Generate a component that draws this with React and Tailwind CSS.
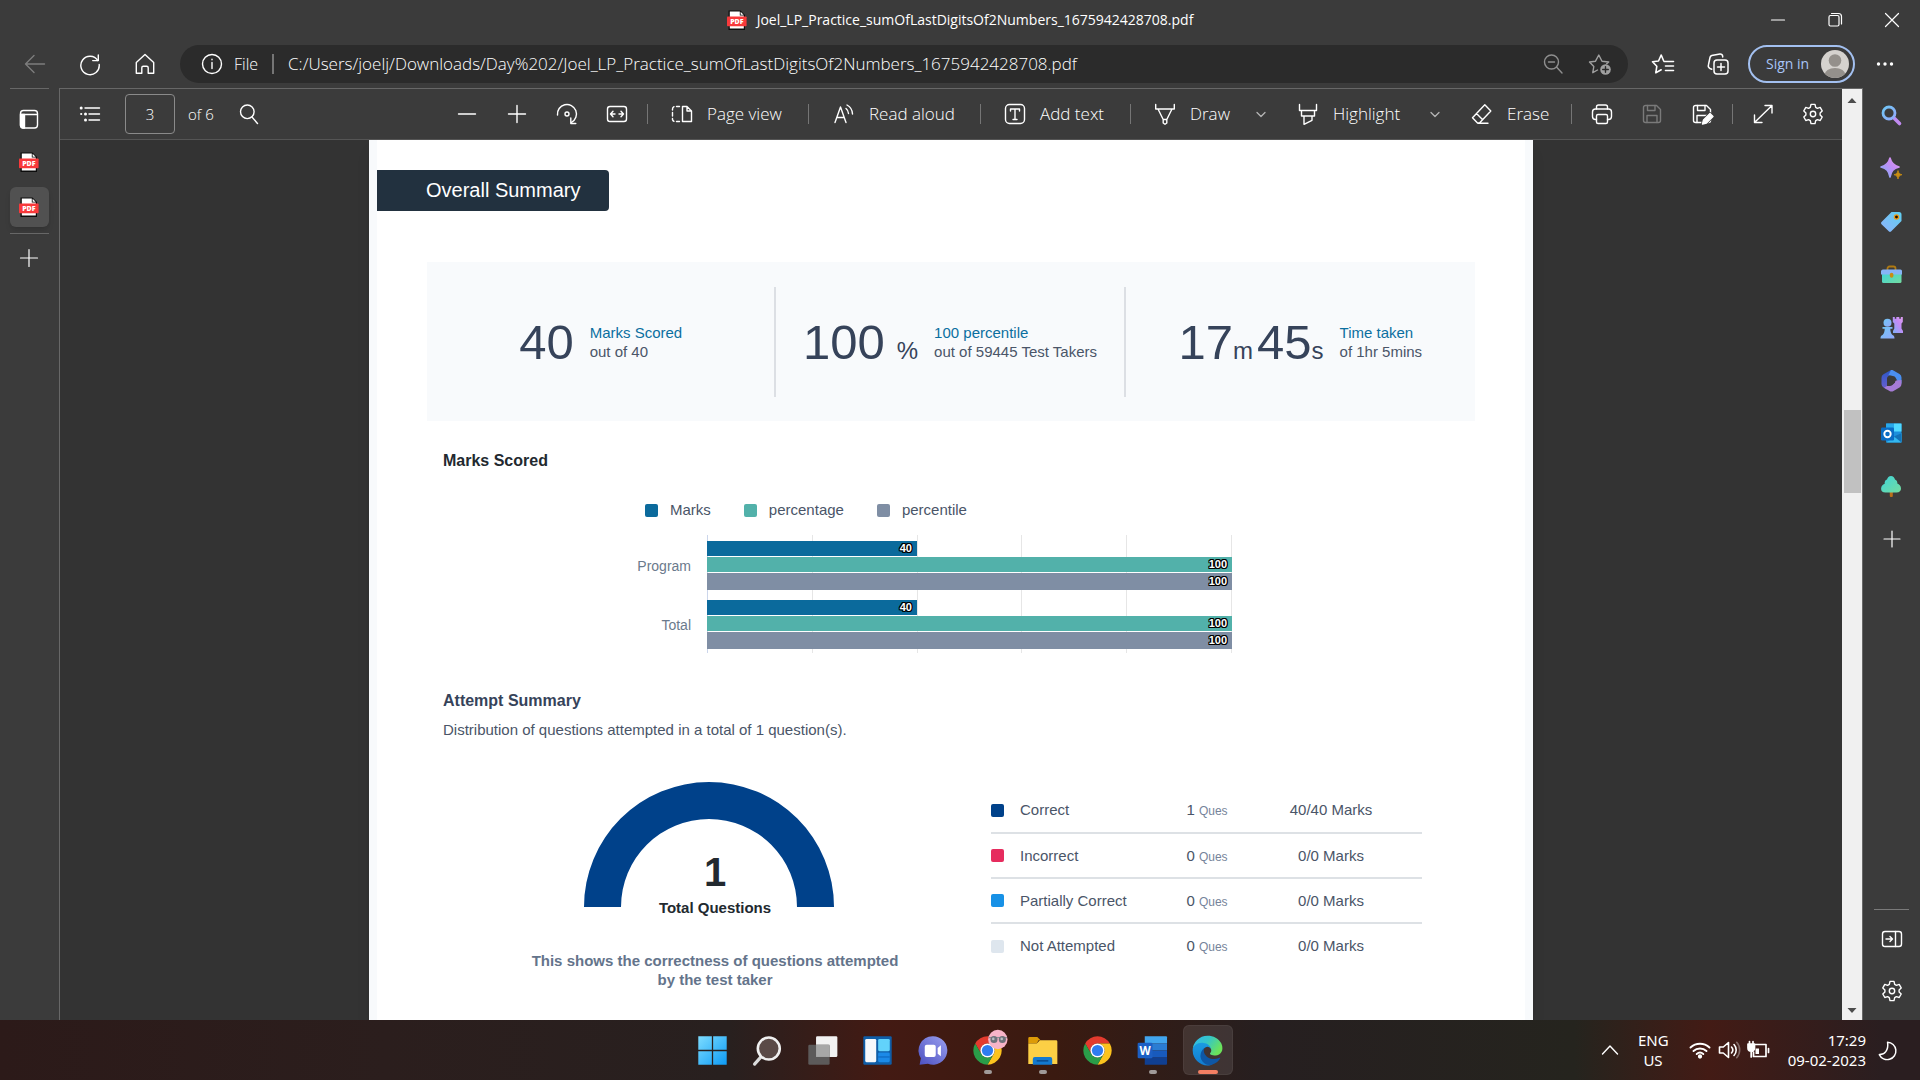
import React from "react";

const PDF_NAME = "Joel_LP_Practice_sumOfLastDigitsOf2Numbers_1675942428708.pdf";

function Line({ size = 24, children, className = "", sw = 1.4 }) {
  return (
    <svg
      width={size}
      height={size}
      viewBox="0 0 24 24"
      fill="none"
      stroke="currentColor"
      strokeWidth={sw}
      strokeLinecap="round"
      strokeLinejoin="round"
      className={"shrink-0 " + className}
      aria-hidden="true"
    >
      {children}
    </svg>
  );
}

function IconButton({ label, className = "w-10 h-10", children }) {
  return (
    <button type="button" aria-label={label} className={"flex shrink-0 items-center justify-center " + className}>
      {children}
    </button>
  );
}

function PdfIcon() {
  return (
    <svg width="20" height="20" viewBox="0 0 20 20" className="shrink-0" aria-hidden="true">
      <path d="M1.5.5h12L18 5v15H1.5z" fill="#0c0c0c" />
      <path d="M2.8 1.4h10v4.2h4V18.6h-14z" fill="#fff" />
      <path d="M13.6 1.8v3h3z" fill="#fff" />
      <rect x="0" y="6.4" width="19.6" height="9.8" rx=".8" fill="#f8393b" />
      <text x="9.8" y="13.8" fontSize="7" fontWeight="800" fill="#fff" textAnchor="middle" fontFamily="Open Sans, sans-serif">PDF</text>
    </svg>
  );
}

function GearIcon() {
  return (
    <Line>
      <path d="M10 2.4h4l.7 2.9 1.7 1 2.8-.9 2 3.5-2.1 2v2.1l2.1 2-2 3.5-2.8-.8-1.7 1-.7 2.9h-4l-.7-2.9-1.7-1-2.8.8-2-3.5 2.1-2V10.900l-2.100-2 2-3.500 2.800.9 1.700-1z" />
      <circle cx="12" cy="12" r="2.700" />
    </Line>
  );
}

function TitleBar() {
  return (
    <header className="grid h-10 shrink-0 grid-cols-[1fr_auto_1fr] items-center">
      <span />
      <h1 className="flex items-center gap-2.5 text-sm leading-5">
        <PdfIcon />
        <span>{PDF_NAME}</span>
      </h1>
      <div className="flex justify-end">
        <IconButton label="Minimize" className="h-10 w-[57px]">
          <Line sw={1.2}><path d="M5.500 12h13" /></Line>
        </IconButton>
        <IconButton label="Restore" className="h-10 w-[57px]">
          <Line sw={1.2}>
            <rect x="6" y="7.500" width="10" height="10.500" rx="1.500" />
            <path d="M8.500 5.500h7a3 3 0 0 1 3 3V16" />
          </Line>
        </IconButton>
        <IconButton label="Close" className="h-10 w-[57px]">
          <Line sw={1.2}><path d="M5.500 5.500l13 13M18.500 5.500l-13 13" /></Line>
        </IconButton>
      </div>
    </header>
  );
}

function AddressRow() {
  return (
    <nav aria-label="Browser" className="flex h-12 shrink-0 items-center pr-[5px] pl-[7px]">
      <IconButton label="Back" className="h-10 w-[55px] text-[#7d7d7d]">
        <Line><path d="M2.500 12H21.500M11 3.500L2.500 12l8.500 8.500" /></Line>
      </IconButton>
      <IconButton label="Refresh" className="h-10 w-[55px]">
        <Line>
          <path d="M19.800 8.500A9.200 9.200 0 1 0 21.200 12.500" />
          <path d="M20.300 3v5.600h-5.600" />
        </Line>
      </IconButton>
      <IconButton label="Home" className="h-10 w-[55px]">
        <Line><path d="M3.300 10.500L12 2.600l8.700 7.900v10.700h-5.500v-5.500a1.500 1.500 0 0 0-1.500-1.500h-3.400a1.500 1.500 0 0 0-1.500 1.500v5.500H3.300z" /></Line>
      </IconButton>
      <div className="ml-2 flex h-[38px] min-w-0 flex-1 items-center rounded-full bg-[#2b2b2b] pr-[5px] pl-5">
        <Line>
          <circle cx="12" cy="12" r="9.500" />
          <path d="M12 10.500v6M12 7.300v.4" />
        </Line>
        <span className="ml-2.5 text-base font-light">File</span>
        <span className="mr-3.5 ml-3.5 h-5 w-0.5 bg-[#757575]" />
        <input
          type="text"
          aria-label="Address"
          defaultValue={"C:/Users/joelj/Downloads/Day%202/" + PDF_NAME}
          className="min-w-0 flex-1 bg-transparent text-[17px] font-light outline-none"
        />
        <IconButton label="Zoom out" className="h-9 w-[47px] text-[#8f8f8f]">
          <Line>
            <circle cx="10.500" cy="10" r="7" />
            <path d="M15.500 15l5.500 6M7.500 10h6" />
          </Line>
        </IconButton>
        <IconButton label="Add to favorites" className="h-9 w-[47px] text-[#a0a0a0]">
          <Line>
            <path d="M9.500 18l-4.700 2.700 1-6.200L1.500 10l6-.8L10.800 3l3.200 6.200 6.700.8-2 1.800" />
            <circle cx="17.500" cy="17.500" r="5.300" fill="currentColor" stroke="none" />
            <path d="M17.500 14.700v5.600M14.700 17.500h5.600" stroke="#2b2b2b" />
          </Line>
        </IconButton>
      </div>
      <IconButton label="Favorites" className="ml-[7px] h-10 w-[55px]">
        <Line sw={1.600}>
          <path d="M12.500 8.500L10.200 3 7.500 9l-6 .8 4.300 4.500-1 6.500 5.400-3" />
          <path d="M13 9.500h9.500M14.500 14h8M14.500 18.500h8" />
        </Line>
      </IconButton>
      <IconButton label="Collections" className="h-10 w-[55px]">
        <Line sw={1.500}>
          <rect x="8" y="8" width="14" height="14" rx="3" />
          <path d="M15 11.500v7M11.500 15h7" />
          <path d="M5.800 17.300L4 16.500a3 3 0 0 1-1.600-3.500L4 5.500A3 3 0 0 1 7 3.300L14 2a2.500 2.500 0 0 1 2.700 2.500V5" />
        </Line>
      </IconButton>
      <button
        type="button"
        className="ml-[3px] flex h-[38px] w-[107px] shrink-0 items-center justify-between rounded-full border-2 border-[#a3c0f0] pr-1 pl-4 text-sm text-[#a9c5f8]"
      >
        Sign in
        <svg width="28" height="28" viewBox="0 0 28 28" aria-hidden="true">
          <defs><clipPath id="avatar"><circle cx="14" cy="14" r="14" /></clipPath></defs>
          <g clipPath="url(#avatar)">
            <rect width="28" height="28" fill="#d5d2ce" />
            <circle cx="14" cy="10.500" r="6.300" fill="#94908b" />
            <ellipse cx="14" cy="25" rx="10.500" ry="7" fill="#94908b" />
          </g>
        </svg>
      </button>
      <IconButton label="Settings and more" className="h-10 w-[60px]">
        <Line>
          <g fill="currentColor" stroke="none">
            <circle cx="5.500" cy="12" r="1.700" /><circle cx="12" cy="12" r="1.700" /><circle cx="18.500" cy="12" r="1.700" />
          </g>
        </Line>
      </IconButton>
    </nav>
  );
}

function LeftRail() {
  return (
    <aside className="flex w-[60px] shrink-0 flex-col items-center border-r border-[#676767] pr-px">
      <span className="h-px w-[39px] bg-[#676767]" />
      <IconButton label="Tab actions" className="mt-2.5 h-10 w-10">
        <Line>
          <rect x="3.500" y="3.500" width="17" height="17.500" rx="3" />
          <path d="M4 7.500h16" />
          <path d="M3.500 7.500h4V21H6a2.500 2.500 0 0 1-2.500-2.500z" fill="currentColor" />
        </Line>
      </IconButton>
      <IconButton label="PDF tab" className="mt-[3px] h-10 w-10"><PdfIcon /></IconButton>
      <IconButton label={PDF_NAME} className="mt-[5px] h-10 w-[39px] rounded-md bg-[#515151] shadow-md"><PdfIcon /></IconButton>
      <span className="mt-1.5 h-px w-[39px] bg-[#676767]" />
      <IconButton label="New tab" className="mt-1 h-10 w-10">
        <Line sw={1.200}><path d="M3.500 12h17M12 3.500v17" /></Line>
      </IconButton>
    </aside>
  );
}

function Divider() {
  return <span className="h-5 w-px shrink-0 bg-[#757575]" />;
}

function Tool({ label, className, children }) {
  return (
    <button type="button" className={"flex h-10 shrink-0 items-center gap-[13px] text-[17px] font-light whitespace-nowrap " + className}>
      {children}
      {label}
    </button>
  );
}

function Chevron() {
  return <Line sw={1.300}><path d="M8 10.500l4 4 4-4" /></Line>;
}

function PdfToolbar() {
  return (
    <div role="toolbar" aria-label="PDF" className="flex h-[51px] shrink-0 items-center border-b border-[#555] bg-[#3b3b3b] pr-[9px] pl-2.5">
      <IconButton label="Contents">
        <Line>
          <path d="M7 6h14.500M11 12h10.500M11 18h10.500" />
          <g fill="currentColor" stroke="none">
            <circle cx="3.200" cy="6" r="1.500" /><circle cx="7.500" cy="12" r="1.500" /><circle cx="7.500" cy="18" r="1.500" />
            <circle cx="3.200" cy="12" r="1.100" />
          </g>
        </Line>
      </IconButton>
      <input
        type="text"
        aria-label="Page number"
        defaultValue="3"
        className="ml-[15px] h-10 w-[50px] rounded-sm border border-[#8a8a8a] bg-transparent text-center text-[15px] font-light outline-none"
      />
      <span className="ml-[13px] w-[30px] text-[15px] font-light whitespace-nowrap">of 6</span>
      <IconButton label="Find" className="ml-[11px] h-10 w-10">
        <Line>
          <circle cx="10.300" cy="9.800" r="6.800" />
          <path d="M15 15l5.500 6.500" />
        </Line>
      </IconButton>

      <div className="ml-auto flex items-center">
        <div className="mr-2.5 flex gap-2.5">
          <IconButton label="Zoom out"><Line><path d="M3.500 12h17" /></Line></IconButton>
          <IconButton label="Zoom in"><Line><path d="M3.500 12h17M12 3.500v17" /></Line></IconButton>
          <IconButton label="Rotate">
            <Line>
              <path d="M2.500 13A9.500 9.500 0 1 1 16.500 20.300" />
              <path d="M15.800 16v5.500h5" />
              <circle cx="12" cy="12" r="2" />
            </Line>
          </IconButton>
          <IconButton label="Fit to width">
            <Line>
              <rect x="2.500" y="4.500" width="19" height="15" rx="2.500" />
              <path d="M5.500 12h4.500M14 12h4.500M8 9.300L5.500 12 8 14.700M16 9.300l2.500 2.700-2.500 2.700" />
            </Line>
          </IconButton>
        </div>
        <Divider />
        <Tool label="Page view" className="w-[160px] pl-[22px]">
          <Line>
            <path d="M12.500 4.500H17l4.500 4.500v10.500h-9zM17 4.500V9h4.500" />
            <path d="M9.500 4.500H6.500M2.500 8v-1a2.500 2.500 0 0 1 1.500-2.300M2.500 10.500v3.500M2.500 16.500v1A2.500 2.500 0 0 0 4 19.300M6.500 19.500h3" />
          </Line>
        </Tool>
        <Divider />
        <Tool label="Read aloud" className="w-[171px] pl-[23px]">
          <Line>
            <path d="M3 20.500L8.500 5l5.500 15.500M5 15.500h7" />
            <path d="M14 6.500a7 7 0 0 1 2.500 5M15 3a10.500 10.500 0 0 1 5.500 9" />
          </Line>
        </Tool>
        <Divider />
        <Tool label="Add text" className="w-[149px] pl-[22px]">
          <Line>
            <rect x="2.500" y="2.500" width="19" height="19" rx="4" />
            <path d="M7.500 9V7h9v2M12 7v10.500M10 17.500h4" />
          </Line>
        </Tool>
        <Divider />
        <Tool label="Draw" className="w-[110px] pl-[22px]">
          <Line>
            <path d="M2.700 2.500v4.500h18.600V2.500M5 7l5.200 10.500V21l1.800 1.300L13.800 21v-3.500L19 7M10.200 17.500h3.600" />
          </Line>
        </Tool>
        <IconButton label="Draw options" className="h-10 w-10 text-[#b5b5b5]"><Chevron /></IconButton>
        <Tool label="Highlight" className="w-[134px] pl-[15px]">
          <Line>
            <path d="M3.500 2.500v6h17v-6M5.500 8.500V14h13V8.500M8 14v8.300l8-4V14" />
          </Line>
        </Tool>
        <IconButton label="Highlight options" className="h-10 w-10 text-[#b5b5b5]"><Chevron /></IconButton>
        <Tool label="Erase" className="w-[116px] pl-[15px]">
          <Line>
            <path d="M14.800 2.800l6 6.200L9.500 21H7.500l-5-5.200zM6.500 11.500l6.200 6.300M8 21.300h10" />
          </Line>
        </Tool>
        <Divider />
        <div className="mx-2.5 flex gap-2.5">
          <IconButton label="Print">
            <Line>
              <path d="M6.500 17.500h-1a3 3 0 0 1-3-3V10a3 3 0 0 1 3-3h13a3 3 0 0 1 3 3v4.500a3 3 0 0 1-3 3h-1" />
              <path d="M6.500 7V5a2 2 0 0 1 2-2h7a2 2 0 0 1 2 2v2" />
              <rect x="6.500" y="12.500" width="11" height="9" rx="1.500" />
            </Line>
          </IconButton>
          <IconButton label="Save" className="h-10 w-10 text-[#7a7a7a]"><SaveShape /></IconButton>
          <IconButton label="Save as"><SaveShape edit /></IconButton>
        </div>
        <Divider />
        <div className="ml-2.5 flex gap-2.5">
          <IconButton label="Full screen">
            <Line><path d="M14 3.500h7V11M21 3.500L3.500 20.500M3.500 13v7.500H11" /></Line>
          </IconButton>
          <IconButton label="PDF settings"><GearIcon /></IconButton>
        </div>
      </div>
    </div>
  );
}

function SaveShape({ edit = false }) {
  return (
    <Line>
      <path d="M5.500 3.500h11l4 4V18.500a2 2 0 0 1-2 2h-13a2 2 0 0 1-2-2v-13a2 2 0 0 1 2-2z" />
      <path d="M7.500 3.500v5h7.500v-5M7 20.500v-7h10v7" />
      {edit && (
        <>
          <path d="M12.500 22l1-4 6.500-6.500 3 3-6.500 6.500z" fill="currentColor" stroke="#3b3b3b" strokeWidth="3" />
          <path d="M12.500 22l1-4 6.500-6.500 3 3-6.500 6.500z" fill="currentColor" />
        </>
      )}
    </Line>
  );
}

function Stat({ title, note, children }) {
  return (
    <div className="flex h-[110px] items-center justify-center gap-4 border-[#dcdfe4] text-[#36435a] not-last:border-r-2">
      <div className="flex items-baseline text-[49px] leading-[56px]">{children}</div>
      <p className="text-[15px] leading-[19px] text-[#4a5568]">
        <span className="block text-[#0b6fa0]">{title}</span>
        {note}
      </p>
    </div>
  );
}

const SERIES = [
  { name: "Marks", swatch: "bg-[#0b6a9c]", bar: "h-[15px] bg-[#0b6a9c]" },
  { name: "percentage", swatch: "bg-[#52b1aa]", bar: "h-[15px] bg-[#52b1aa]" },
  { name: "percentile", swatch: "bg-[#7f8ea4]", bar: "h-[17px] bg-[#7f8ea4]" },
];

const SCORES = [
  { name: "Program", values: [40, 100, 100] },
  { name: "Total", values: [40, 100, 100] },
];

function MarksChart() {
  return (
    <figure className="w-[590px]">
      <figcaption className="ml-[3px] flex gap-[33px] text-[15px] leading-5 text-[#4a5568]">
        {SERIES.map((s) => (
          <span key={s.name} className="flex items-center gap-3">
            <span className={"size-[13px] rounded-xs " + s.swatch} />
            {s.name}
          </span>
        ))}
      </figcaption>
      <div className="mt-[15px] flex">
        <div className="flex w-[49px] shrink-0 flex-col gap-2.5 pt-1.5 text-sm text-[#6b7a8c]">
          {SCORES.map((g) => (
            <span key={g.name} className="flex h-[49px] items-center justify-end">{g.name}</span>
          ))}
        </div>
        <div className="relative ml-4 flex-1">
          <div className="absolute inset-0 grid grid-cols-5 border-l border-[#ccd6eb]">
            {[1, 2, 3, 4, 5].map((n) => <span key={n} className="border-r border-[#e6e6e6]" />)}
          </div>
          <div className="relative flex flex-col gap-2.5 pt-1.5 pb-1">
            {SCORES.map((g) => (
              <div key={g.name} className="flex flex-col gap-px">
                {g.values.map((v, i) => (
                  <div
                    key={SERIES[i].name}
                    className={"flex items-center justify-end pr-[5px] text-[11px] leading-none font-bold text-white [text-shadow:1px_0_#000,-1px_0_#000,0_1px_#000,0_-1px_#000,1px_1px_#000,-1px_-1px_#000,1px_-1px_#000,-1px_1px_#000] " + SERIES[i].bar}
                    style={{ width: v + "%" }}
                  >
                    {v}
                  </div>
                ))}
              </div>
            ))}
          </div>
        </div>
      </div>
    </figure>
  );
}

const ATTEMPTS = [
  { name: "Correct", swatch: "bg-[#00418a]", ques: 1, marks: "40/40 Marks" },
  { name: "Incorrect", swatch: "bg-[#e62c5e]", ques: 0, marks: "0/0 Marks" },
  { name: "Partially Correct", swatch: "bg-[#1791e6]", ques: 0, marks: "0/0 Marks" },
  { name: "Not Attempted", swatch: "bg-[#dee6ee]", ques: 0, marks: "0/0 Marks" },
];

function AttemptTable() {
  return (
    <table className="mt-1.5 ml-1 w-[431px] table-fixed border-collapse self-start text-[15px] leading-5 text-[#4a5568]">
      <colgroup>
        <col className="w-[154px]" />
        <col className="w-[124px]" />
        <col />
      </colgroup>
      <tbody>
        {ATTEMPTS.map((a) => (
          <tr key={a.name} className="h-[45px] border-[#dde1e5] not-last:border-b-2">
            <th scope="row" className="p-0 text-left font-normal">
              <span className="flex items-center gap-4">
                <span className={"size-[13px] rounded-xs " + a.swatch} />
                {a.name}
              </span>
            </th>
            <td className="p-0 text-center">
              {a.ques} <span className="text-xs text-[#76849a]">Ques</span>
            </td>
            <td className="p-0 pr-[29px] text-center">{a.marks}</td>
          </tr>
        ))}
      </tbody>
    </table>
  );
}

function ReportPage() {
  return (
    <main className="w-full max-w-[1164px] bg-[#f8fafc] px-2 font-['Liberation_Sans',Arial,sans-serif] shadow-lg">
      <div className="h-full bg-white pt-[30px]">
        <h2 className="flex h-[41px] w-[232px] items-center rounded-r-sm bg-[#22313f] pb-px pl-[49px] text-xl text-white">Overall Summary</h2>
        <section className="mx-[50px] mt-[51px] grid h-[159px] grid-cols-3 items-center bg-[#f8fafc]">
          <Stat title="Marks Scored" note="out of 40">40</Stat>
          <Stat title="100 percentile" note="out of 59445 Test Takers">
            100<span className="ml-3 text-2xl">%</span>
          </Stat>
          <Stat title="Time taken" note="of 1hr 5mins">
            17<span className="mr-1 text-2xl">m</span>45<span className="text-2xl">s</span>
          </Stat>
        </section>
        <section className="pl-[66px]">
          <h3 className="mt-7 text-base leading-6 font-bold text-[#22292f]">Marks Scored</h3>
          <div className="mt-[27px] pl-[199px]"><MarksChart /></div>
          <h3 className="mt-9 text-base leading-6 font-bold text-[#36435a]">Attempt Summary</h3>
          <p className="mt-[7px] text-[15px] leading-5 text-[#4a5568]">Distribution of questions attempted in a total of 1 question(s).</p>
          <div className="mt-[42px] flex">
            <div className="flex w-[544px] flex-col items-center">
              <div className="relative w-[262px]">
                <svg width="250" height="136" viewBox="0 0 250 136" aria-hidden="true">
                  <path d="M0 125A125 125 0 0 1 250 125H213A88 88 0 0 0 37 125Z" fill="#00418a" />
                </svg>
                <p className="absolute inset-0 flex flex-col items-center justify-end text-[15px] leading-5 font-bold text-[#22292f]">
                  <span className="mb-1.5 text-[40px] leading-10">1</span>
                  Total Questions
                </p>
              </div>
              <p className="mt-[33px] text-center text-[15px] leading-[19px] font-bold text-[#64748b]">
                This shows the correctness of questions attempted<br />by the test taker
              </p>
            </div>
            <AttemptTable />
          </div>
        </section>
      </div>
    </main>
  );
}

function ScrollBar() {
  return (
    <div className="flex w-5 shrink-0 flex-col items-center bg-[#f0f0f0]">
      <svg width="20" height="22" viewBox="0 0 20 22" aria-hidden="true"><path d="M5.500 14l4.500-5 4.500 5z" fill="#4d4d4d" /></svg>
      <span className="flex-[299]" />
      <span className="h-[83px] w-[17px] bg-[#c1c1c1]" />
      <span className="flex-[505]" />
      <svg width="20" height="22" viewBox="0 0 20 22" aria-hidden="true"><path d="M5.500 10l4.500 5 4.500-5z" fill="#4d4d4d" /></svg>
    </div>
  );
}

const APP_ICONS = [
  {
    label: "Search",
    art: (
      <>
        <path d="M14.500 14.500l5 5" stroke="#c08af0" strokeWidth="3.600" strokeLinecap="round" />
        <circle cx="9" cy="9" r="6" fill="none" stroke="url(#gSky)" strokeWidth="2.800" />
      </>
    ),
  },
  {
    label: "Discover",
    art: (
      <>
        <path d="M10 1c1.200 5 3.300 7.600 9 9-5.700 1.400-7.800 4.100-9 10-1.200-5.900-3.300-8.600-9-10 5.700-1.400 7.800-4 9-9z" fill="url(#gViolet)" stroke="url(#gViolet)" strokeWidth="1.600" strokeLinejoin="round" />
        <path d="M18 13.500c.6 2.700 1.500 3.600 4 4.200-2.500.6-3.400 1.500-4 4.300-.6-2.800-1.500-3.700-4-4.300 2.500-.6 3.400-1.500 4-4.200z" fill="#c98d12" stroke="#c98d12" strokeWidth=".8" strokeLinejoin="round" />
      </>
    ),
  },
  {
    label: "Shopping",
    art: (
      <>
        <path d="M11.500 2H19a2.500 2.500 0 0 1 2.500 2.500V11L11 21.500a1.500 1.500 0 0 1-2 0l-7.500-7.300a1.500 1.500 0 0 1 0-2.200z" fill="url(#gTag)" />
        <circle cx="16.500" cy="7" r="2.100" fill="#1f1300" stroke="#f29b12" strokeWidth="1.300" />
      </>
    ),
  },
  {
    label: "Tools",
    art: (
      <>
        <path d="M7.500 7V5.500a2 2 0 0 1 2-2h4a2 2 0 0 1 2 2V7" fill="none" stroke="#b07a12" strokeWidth="1.800" />
        <rect x="2" y="10" width="19.500" height="10" rx="1.500" fill="url(#gTeal)" />
        <path d="M3 6.500h17.500a1.500 1.500 0 0 1 1.500 1.500v3.500H1V8a2 2 0 0 1 2-1.500z" fill="#86b4f7" />
        <rect x="9.800" y="9.800" width="3.600" height="5" rx="1.800" fill="#c98d12" />
      </>
    ),
  },
  {
    label: "Games",
    art: (
      <>
        <path d="M12.800 1h2v1.800h1.500V1h3v1.800h1.500V1h2v5l-1.300 1.500v5l1.500 2.500v2H13v-2l1.300-2.500v-5L12.800 6z" fill="url(#gViolet)" />
        <circle cx="7.500" cy="6.800" r="4" fill="url(#gSky)" />
        <path d="M2.500 11h10v1.800h-2.200c0 3 .8 5 2.200 6.200 1.500.5 2 1.500 2 3.500H.5c0-2 .5-3 2-3.500 1.400-1.200 2.200-3.200 2.200-6.200H2.500z" fill="url(#gSky)" />
      </>
    ),
  },
  {
    label: "Microsoft 365",
    art: (
      <>
        <path d="M11 1L3.500 5.300A4 4 0 0 0 1.500 9v6a4 4 0 0 0 2 3.400l3.500 2V9.500a3 3 0 0 1 1.500-2.600L15 3z" fill="url(#gIris)" />
        <path d="M11 1h1.500l7 4a4 4 0 0 1 2 3.500v6L18 13l-2.500-4.500a3 3 0 0 0-1.500-1.300L8.500 6z" fill="#4a8ff0" />
        <path d="M21.500 11v4a4 4 0 0 1-2 3.500l-6 3.500a4 4 0 0 1-4 0L4 18.800l3-1.800h3a4 4 0 0 0 3-1.500l3-4z" fill="#a67cd6" />
        <path d="M11.500 8l3.500 2.300v3.400L11.500 16 8 13.700v-3.400z" fill="#3b3b3b" />
      </>
    ),
  },
  {
    label: "Outlook",
    art: (
      <>
        <rect x="6" y="1.500" width="15.500" height="19" rx="1" fill="#1b8fdc" />
        <path d="M6 1.500h8v8H6z" fill="#28a8ea" /><path d="M14 1.500h7.500v8H14z" fill="#50d9ff" />
        <path d="M6 20.500L21.500 11v9.500z" fill="#33b8f0" /><path d="M21.500 11v9.500L14 14.500z" fill="#1272b8" />
        <rect x="1" y="5.500" width="13" height="13" rx="1.200" fill="#0a6cc4" />
        <circle cx="7.500" cy="12" r="3.200" fill="none" stroke="#fff" strokeWidth="1.900" />
      </>
    ),
  },
  {
    label: "Drop",
    art: (
      <>
        <rect x="9.800" y="15" width="3" height="7" rx="1" fill="#b96f1b" />
        <path d="M11 1c2 0 3.600 1.600 4 3.600 1.700.6 2.600 2.200 2.300 4 2 .7 3.500 2.300 3.700 4.600.2 2.600-1.500 4.300-4.500 4.300h-11C2.500 17.500.9 15.800 1.100 13.400c.2-2.300 1.600-4 3.600-4.700-.3-2 .6-3.500 2.300-4.100C7.400 2.600 9 1 11 1z" fill="url(#gTeal)" />
      </>
    ),
  },
];

function RightRail() {
  return (
    <aside className="flex w-[58px] shrink-0 flex-col items-center border-l border-[#676767] pt-[7px] pb-[9px]">
      <svg width="0" height="0" className="absolute" aria-hidden="true">
        <defs>
          <linearGradient id="gSky" x1="0" y1="0" x2="1" y2="1"><stop offset="0" stopColor="#6fc6f5" /><stop offset="1" stopColor="#93a9fb" /></linearGradient>
          <linearGradient id="gTag" x1="1" y1="0" x2="0" y2="1"><stop offset="0" stopColor="#5ed0f0" /><stop offset="1" stopColor="#8fb2fb" /></linearGradient>
          <linearGradient id="gViolet" x1="0" y1="1" x2="1" y2="0"><stop offset="0" stopColor="#7db0f8" /><stop offset=".6" stopColor="#c48bf5" /><stop offset="1" stopColor="#e1a0ee" /></linearGradient>
          <linearGradient id="gTeal" x1="0" y1="0" x2="1" y2="1"><stop offset="0" stopColor="#3fd4d8" /><stop offset="1" stopColor="#74dca0" /></linearGradient>
          <linearGradient id="gIris" x1="0" y1="0" x2="0" y2="1"><stop offset="0" stopColor="#2b56c8" /><stop offset="1" stopColor="#6a5fd0" /></linearGradient>
        </defs>
      </svg>
      {APP_ICONS.map((a) => (
        <IconButton key={a.label} label={a.label} className="mb-[13px] h-10 w-10">
          <svg width="23" height="23" viewBox="0 0 23 23" aria-hidden="true">{a.art}</svg>
        </IconButton>
      ))}
      <IconButton label="Add app">
        <Line sw={1.200}><path d="M4 12h16M12 4v16" /></Line>
      </IconButton>
      <span className="mt-auto h-px w-[35px] bg-[#7a7a7a]" />
      <IconButton label="Hide sidebar" className="mt-[9px] h-10 w-10">
        <Line>
          <rect x="2.500" y="4.500" width="19" height="15" rx="2.500" />
          <path d="M15.500 4.500v15M6 12h6.500M10 9.500l2.500 2.500-2.500 2.500" />
        </Line>
      </IconButton>
      <IconButton label="Sidebar settings" className="mt-3 h-10 w-10"><GearIcon /></IconButton>
    </aside>
  );
}

function ChromeArt() {
  return (
    <>
      <path d="M24 13H43.050A22 22 0 0 0 4.950 13L14.470 29.500A11 11 0 0 1 24 13Z" fill="#e33b2e" />
      <path d="M43.050 13A22 22 0 0 1 24 46L33.530 29.500A11 11 0 0 0 24 13Z" fill="#fcc31e" />
      <path d="M24 46A22 22 0 0 1 4.950 13L14.470 29.500A11 11 0 0 0 33.530 29.500Z" fill="#2a9d48" />
      <circle cx="24" cy="24" r="11" fill="#fff" />
      <circle cx="24" cy="24" r="8.700" fill="#2f7cf0" />
    </>
  );
}

const TASKS = [
  {
    label: "Start",
    art: (
      <g fill="url(#tWin)">
        <path d="M2 2h21v21H2zM25 2h21v21H25zM2 25h21v21H2zM25 25h21v21H25z" />
      </g>
    ),
  },
  {
    label: "Search",
    art: (
      <>
        <path d="M14 34L4 45" stroke="#dcdcdc" strokeWidth="5" strokeLinecap="round" />
        <circle cx="26" cy="21" r="17" fill="#5a4a47" stroke="#f0f0f0" strokeWidth="4" />
      </>
    ),
  },
  {
    label: "Task view",
    art: (
      <>
        <rect x="14" y="2" width="33" height="32" rx="2" fill="#f2f2f2" />
        <rect x="2" y="15" width="33" height="31" rx="2" fill="#5c5a5a" />
        <rect x="14" y="15" width="21" height="19" fill="#a7a7a7" />
      </>
    ),
  },
  {
    label: "Widgets",
    art: (
      <>
        <rect x="2" y="2" width="44" height="44" rx="2" fill="#0f5ea8" />
        <rect x="5" y="6" width="17" height="36" rx="2" fill="#f6f8fb" />
        <rect x="25" y="6" width="18" height="19" rx="2" fill="#62d2fb" />
        <rect x="25" y="27" width="18" height="15" rx="2" fill="#1b8ae8" />
        <path d="M25 34h18" stroke="#0f6cc4" strokeWidth="2" />
      </>
    ),
  },
  {
    label: "Chat",
    art: (
      <>
        <path d="M24 2a22 22 0 1 1-7 42.500L4 46l2-10A22 22 0 0 1 24 2z" fill="url(#tChat)" />
        <rect x="12" y="15" width="17" height="19" rx="3" fill="#fff" />
        <path d="M32 20l5-4v17l-5-4z" fill="#fff" />
      </>
    ),
  },
  {
    label: "Chrome profile",
    running: true,
    art: (
      <>
        <ChromeArt />
        <circle cx="40" cy="7" r="15" fill="#f7b4c8" />
        <path d="M26 4h28" stroke="#8b8f96" strokeWidth="2" />
        <circle cx="34" cy="7" r="5.500" fill="#6d727a" /><circle cx="47" cy="7" r="5.500" fill="#6d727a" />
        <circle cx="33" cy="6" r="2" fill="#b9bec4" /><circle cx="46" cy="6" r="2" fill="#b9bec4" />
      </>
    ),
  },
  {
    label: "File Explorer",
    running: true,
    art: (
      <>
        <path d="M2 5a2 2 0 0 1 2-2h12l5 5h-3l-3 5H2z" fill="#dd9b07" />
        <path d="M2 13h13l5-5h25a2 2 0 0 1 2 2v35H2z" fill="#fccf45" />
        <path d="M9 46V37a3 3 0 0 1 3-3h24a3 3 0 0 1 3 3v9z" fill="#1379cf" />
        <path d="M15 40h18" stroke="#0a4f94" strokeWidth="2.500" />
      </>
    ),
  },
  { label: "Chrome", art: <ChromeArt /> },
  {
    label: "Word",
    running: true,
    art: (
      <>
        <path d="M12 2h33a1.500 1.500 0 0 1 1.500 1.500V13H12z" fill="#41a5ee" />
        <path d="M12 13h34.500v11H12z" fill="#2b7cd3" />
        <path d="M12 24h34.500v11H12z" fill="#185abd" />
        <path d="M12 35h34.500v9.500A1.500 1.500 0 0 1 45 46H12z" fill="#103f91" />
        <rect x="1" y="12" width="23" height="24" rx="2" fill="#1c5fc4" />
        <text x="12.500" y="30.500" fontSize="18" fontWeight="700" fill="#fff" textAnchor="middle" fontFamily="Open Sans, sans-serif">W</text>
      </>
    ),
  },
  {
    label: "Microsoft Edge",
    active: true,
    art: (
      <g transform="translate(1 1) scale(.18)">
        <path fill="#0e57a6" d="M231 190.500c-3.400 1.800-6.900 3.400-10.500 4.700a101.900 101.900 0 0 1-35.900 6.400c-47.300 0-88.500-32.500-88.500-74.300a31.500 31.500 0 0 1 16.400-27.300c-42.800 1.800-53.800 46.400-53.800 72.500 0 74 68.100 81.400 82.800 81.400 7.900 0 19.800-2.300 27-4.600l1.300-.4a128.300 128.300 0 0 0 66.600-52.800 4 4 0 0 0-5.400-5.600z" />
        <path fill="url(#tEdgeB)" d="M105.700 241.400a79.200 79.200 0 0 1-22.700-21.300 80.700 80.700 0 0 1 29.500-120c3.200-1.500 8.500-4.100 15.600-4a32.400 32.400 0 0 1 25.700 13 31.900 31.900 0 0 1 6.300 18.700c0-.2 24.500-79.600-80-79.600-43.900 0-80 41.600-80 78.200a130.200 130.200 0 0 0 12.100 56 128 128 0 0 0 156.400 67 75.500 75.500 0 0 1-62.900-8z" />
        <path fill="url(#tEdgeT)" d="M152.300 148.900c-.9 1-3.400 2.500-3.400 5.600 0 2.600 1.700 5.100 4.700 7.300 14.700 10 42.300 8.800 42.400 8.800a60.900 60.900 0 0 0 31-8.600A63.100 63.100 0 0 0 256 108c.2-22.700-8.100-37.800-11.400-44.500C223.500 22.300 179 0 128 0A128 128 0 0 0 0 126.200c.5-36.500 36.800-66 80-66 3.500 0 23.500.3 42 10 16.300 8.600 24.900 19 30.800 29.200 6.200 10.700 7.300 24.200 7.300 29.600 0 5.400-2.700 10.800-7.800 19.900z" />
      </g>
    ),
  },
];

function Taskbar() {
  return (
    <footer className="grid h-[60px] shrink-0 grid-cols-[1fr_auto_1fr] items-center bg-[linear-gradient(90deg,#2c1a19_0%,#2b1e1d_20%,#28201f_38%,#431a13_46%,#3a1a10_55%,#261f20_66%,#25241e_82%,#431b15_89%,#2a1e20_98%)] font-['Noto_Sans',sans-serif]">
      <svg width="0" height="0" className="absolute" aria-hidden="true">
        <defs>
          <linearGradient id="tWin" x1="0" y1="0" x2="1" y2="1"><stop offset="0" stopColor="#7ddcff" /><stop offset="1" stopColor="#0d9bf5" /></linearGradient>
          <linearGradient id="tChat" x1="0" y1="1" x2="1" y2="0"><stop offset="0" stopColor="#4b4fc0" /><stop offset="1" stopColor="#9aa0f0" /></linearGradient>
          <linearGradient id="tEdgeB" x1="0" y1="0" x2="0" y2="1"><stop offset="0" stopColor="#1b9de2" /><stop offset="1" stopColor="#127cd0" /></linearGradient>
          <linearGradient id="tEdgeT" x1="0" y1="0" x2="1" y2=".5"><stop offset="0" stopColor="#2fb8f0" /><stop offset=".5" stopColor="#35c5c8" /><stop offset="1" stopColor="#6be35a" /></linearGradient>
        </defs>
      </svg>
      <span />
      <div className="flex gap-[5px]">
        {TASKS.map((t) => (
          <button
            key={t.label}
            type="button"
            aria-label={t.label}
            className={"relative flex h-[50px] w-[50px] items-center justify-center rounded-md " + (t.active ? "border border-white/5 bg-white/10" : "")}
          >
            <svg width="31" height="31" viewBox="0 0 48 48" className="overflow-visible" aria-hidden="true">{t.art}</svg>
            {t.running && <span className="absolute bottom-px h-1 w-2 rounded-full bg-[#a09a99]" />}
            {t.active && <span className="absolute bottom-0 h-1 w-5 rounded-full bg-[#f37f63]" />}
          </button>
        ))}
      </div>
      <div className="flex items-center justify-end pr-5 text-[15px] leading-5">
        <IconButton label="Hidden icons" className="mr-2 h-10 w-10">
          <Line><path d="M4.500 16l7.500-8 7.500 8" /></Line>
        </IconButton>
        <button type="button" className="w-[30px] text-center">ENG<br />US</button>
        <button type="button" aria-label="Network, sound, battery" className="ml-5 flex h-10 items-center gap-[5px]">
          <Line sw={1.900}>
            <path d="M2.500 9.500a14 14 0 0 1 19 0M5.500 13a9.500 9.500 0 0 1 13 0M8.700 16a5 5 0 0 1 6.600 0" />
            <circle cx="12" cy="18.500" r="1.200" fill="currentColor" />
          </Line>
          <Line sw={1.600}>
            <path d="M2.500 9h3.800L11.500 4.500v15L6.300 15H2.500z" />
            <path d="M14.500 9a4.500 4.500 0 0 1 0 6M17 6.500a8 8 0 0 1 0 11" />
            <path d="M19.700 4.300a11.500 11.500 0 0 1 0 15.400" opacity=".35" />
          </Line>
          <Line sw={1.700}>
            <path d="M9.500 6.500H20v12H7.500v-4.500M22.500 10.500v4" />
            <path d="M2 6h6.500v4a3.200 3.200 0 0 1-6.500 0zM3.500 6V3.500M7 6V3.500M5.200 13v6" fill="currentColor" />
            <path d="M9.500 10.500h3.500v5.500H9.500z" fill="currentColor" stroke="none" />
          </Line>
        </button>
        <button type="button" className="ml-4 w-[80px] text-right whitespace-nowrap">17:29<br />09-02-2023</button>
        <IconButton label="Focus" className="ml-2.5 h-10 w-6">
          <Line sw={1.600} size={22}><path d="M11.500 3.500a9.500 9.500 0 1 1-9 13.500c5.500.3 10.500-4.500 9-13.500z" /></Line>
        </IconButton>
      </div>
    </footer>
  );
}

export default function App() {
  return (
    <div className="flex h-screen flex-col overflow-hidden bg-[#3b3b3b] font-['Open_Sans','Noto_Sans',sans-serif] text-white">
      <TitleBar />
      <AddressRow />
      <div className="flex min-h-0 flex-1">
        <LeftRail />
        <div className="flex min-w-0 flex-1 flex-col border-t border-[#676767]">
          <div className="flex min-h-0 flex-1">
            <div className="flex min-w-0 flex-1 flex-col">
              <PdfToolbar />
              <div className="flex min-h-0 flex-1 justify-center overflow-hidden bg-[#333]">
                <ReportPage />
              </div>
            </div>
            <ScrollBar />
          </div>
        </div>
        <RightRail />
      </div>
      <Taskbar />
    </div>
  );
}
